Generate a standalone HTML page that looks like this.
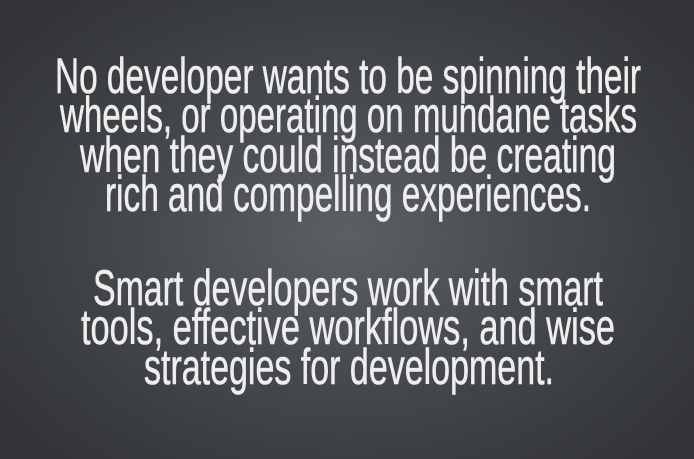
<!DOCTYPE html>
<html><head><meta charset="utf-8"><style>
html,body{margin:0;padding:0;width:694px;height:459px;overflow:hidden}
body{background:radial-gradient(ellipse 420px 300px at 347px 235px,#5c5f63 0%,#45484c 50%,#333538 100%)}
svg{position:absolute;left:0;top:0}
text{font-family:"Liberation Sans Narrow","Liberation Sans",sans-serif;font-size:50px;font-weight:normal;fill:#eeeeee;stroke:#eeeeee;stroke-width:0.6px}
</style></head><body>
<svg width="694" height="459" xmlns="http://www.w3.org/2000/svg">
<text x="55" y="93" textLength="586" lengthAdjust="spacingAndGlyphs">No developer wants to be spinning their</text>
<text x="60" y="132" textLength="577" lengthAdjust="spacingAndGlyphs">wheels, or operating on mundane tasks</text>
<text x="80" y="172" textLength="536" lengthAdjust="spacingAndGlyphs">when they could instead be creating</text>
<text x="105" y="211" textLength="486" lengthAdjust="spacingAndGlyphs">rich and compelling experiences.</text>
<text x="93" y="305" textLength="510" lengthAdjust="spacingAndGlyphs">Smart developers work with smart</text>
<text x="81" y="344" textLength="534" lengthAdjust="spacingAndGlyphs">tools, effective workflows, and wise</text>
<text x="144" y="384" textLength="410" lengthAdjust="spacingAndGlyphs">strategies for development.</text>
</svg>
</body></html>
